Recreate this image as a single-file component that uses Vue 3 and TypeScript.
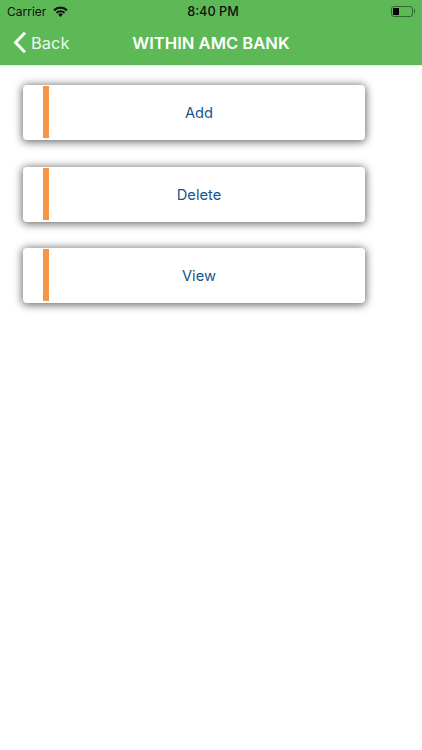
<template>
  <div class="screen">
    <header class="header">
      <div class="status">
        <div class="status__left">
          <span>Carrier</span>
          <svg class="wifi" width="15" height="11" viewBox="0 0 15 11">
            <path d="M0.3 3.6A10.2 10.2 0 0 1 14.7 3.6L13.2 5.2A8.1 8.1 0 0 0 1.8 5.2Z" fill="#111" />
            <path d="M2.8 6.1A6.7 6.7 0 0 1 12.2 6.1L10.7 7.7A4.5 4.5 0 0 0 4.3 7.7Z" fill="#111" />
            <path d="M5.2 8.5A3.2 3.2 0 0 1 9.8 8.5L7.5 10.9Z" fill="#111" />
          </svg>
        </div>
        <span class="status__time">8:40 PM</span>
        <div class="battery">
          <div class="battery__body"><div class="battery__level"></div></div>
          <div class="battery__cap"></div>
        </div>
      </div>
      <div class="nav">
        <div class="nav__back">
          <svg width="14" height="23" viewBox="0 0 14 23">
            <path d="M12 1.8 2.6 11.5l9.4 9.7" fill="none" stroke="#fff" stroke-width="3" />
          </svg>
          <span>Back</span>
        </div>
        <h1 class="nav__title">WITHIN AMC BANK</h1>
      </div>
    </header>
    <main class="list">
      <button v-for="item in items" :key="item" class="card" type="button">
        <span class="card__bar"></span>
        <span class="card__label">{{ item }}</span>
      </button>
    </main>
  </div>
</template>

<script setup lang="ts">
const items: string[] = ['Add', 'Delete', 'View']
</script>

<style>
html,
body {
  margin: 0;
  background: #fff;
}
</style>

<style scoped>
.screen {
  width: 422px;
  height: 750px;
  overflow: hidden;
  background: #fff;
  font-family: Inter, "Liberation Sans", Arial, sans-serif;
}

.header {
  height: 65px;
  background: #5cb956;
  border-bottom: 1px solid #e6efe5;
  box-sizing: content-box;
}

.status {
  display: grid;
  grid-template-columns: 1fr auto 1fr;
  align-items: center;
  height: 21px;
  padding: 1px 7px 0;
  font-size: 12px;
  color: #111;
}

.status__left {
  display: flex;
  align-items: center;
  gap: 7px;
}

.status__time {
  font-weight: 500;
  font-size: 12.7px;
  margin-left: 4px;
}

.battery {
  display: flex;
  align-items: center;
  justify-self: end;
  margin-top: -1px;
}

.battery__body {
  width: 18px;
  height: 7px;
  padding: 1px;
  border: 1px solid #2f6a2e;
  border-radius: 3px;
}

.battery__level {
  width: 6px;
  height: 100%;
  background: #000;
}

.battery__cap {
  width: 1px;
  height: 4px;
  margin-left: 1px;
  background: #2f6a2e;
}

.nav {
  position: relative;
  display: flex;
  align-items: center;
  justify-content: center;
  height: 42px;
}

.nav__back {
  position: absolute;
  left: 13px;
  top: 9px;
  display: flex;
  align-items: center;
  gap: 4px;
  font-size: 16.5px;
  color: #eef8ed;
}

.nav__title {
  margin: 0;
  font-size: 16.6px;
  font-weight: 600;
  color: #fff;
}

.list {
  display: flex;
  flex-direction: column;
  gap: 26.5px;
  width: 342px;
  margin: 19px 0 0 23px;
}

.card {
  position: relative;
  display: flex;
  align-items: center;
  justify-content: center;
  height: 55px;
  padding: 1px 0 0 10px;
  border: 0;
  border-radius: 4px;
  background: #fff;
  box-shadow: 0 1px 8px 1px rgba(0, 0, 0, 0.6);
  font: inherit;
}

.card__bar {
  position: absolute;
  left: 20px;
  top: 1px;
  width: 6px;
  height: 52px;
  background: #f79546;
}

.card__label {
  font-size: 14.7px;
  color: #16558f;
}
</style>
